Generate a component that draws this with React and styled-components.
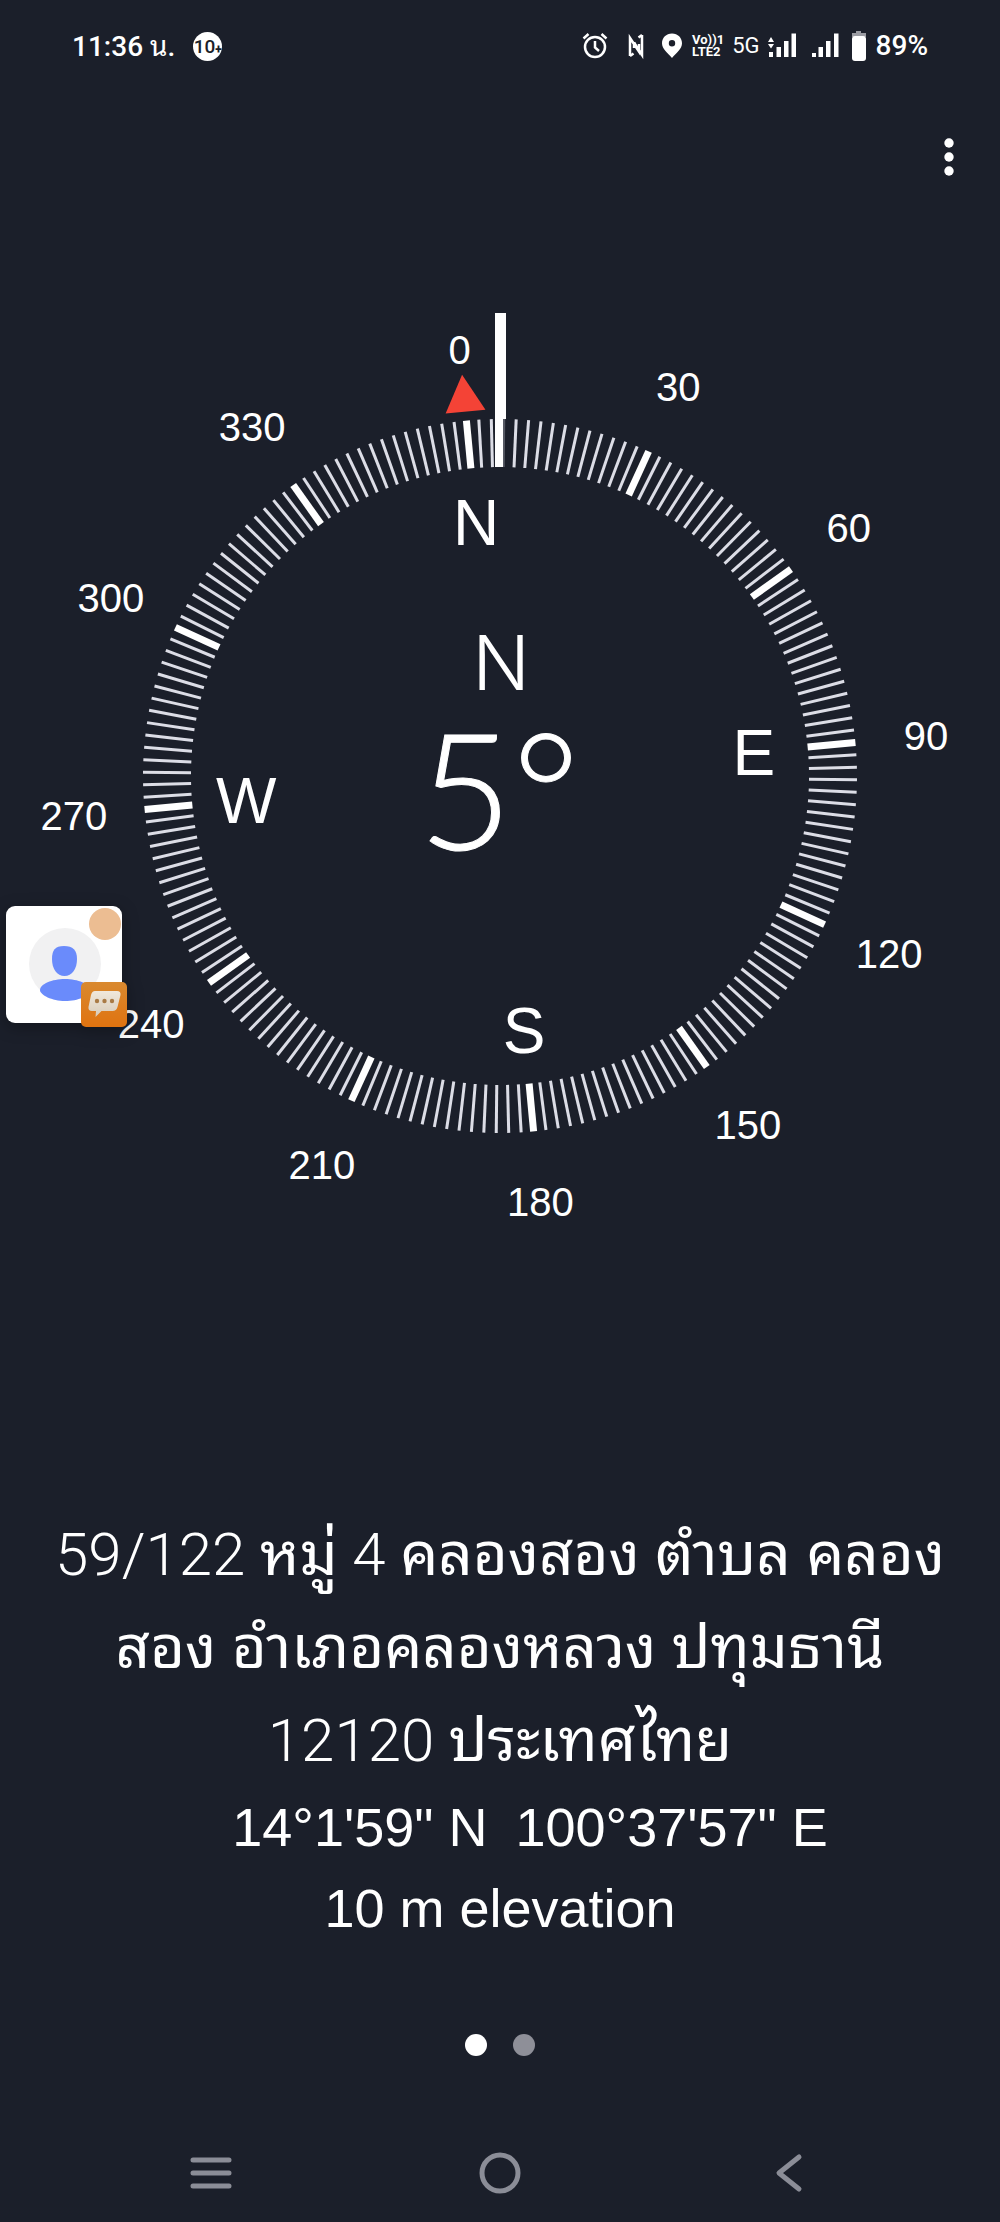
import React from "react";
import styled, { createGlobalStyle } from "styled-components";

const HEADING = 5.4;
const OUTER = 357;
const INNER = 309;

const polar = (deg, r) => {
  const rad = ((deg - HEADING) * Math.PI) / 180;
  return { x: Math.sin(rad) * r, y: -Math.cos(rad) * r };
};

const CARDINALS = [
  { deg: 0, label: "N" },
  { deg: 90, label: "E" },
  { deg: 180, label: "S" },
  { deg: 270, label: "W" },
];

const StatusBar = () => (
  <StatusRow>
    <StatusGroup $gap={18}>
      <StatusText>
        11:36 <Thai>น</Thai>.
      </StatusText>
      <CountBadge>
        10<small>+</small>
      </CountBadge>
    </StatusGroup>
    <StatusGroup $gap={8}>
      <StatusIcon width="26" height="28" viewBox="0 0 26 28">
        <circle cx="13" cy="15" r="10" />
        <path d="M13 9v6.5l4 3.5M1.5 6.5L6.5 2M24.5 6.5L19.5 2" />
      </StatusIcon>
      <StatusIcon width="36" height="28" viewBox="3 0 36 28">
        <path d="M17 24V6l9 13.500V12M21 16v-6" />
        <path d="M29 3v20l-8-12.500M17 24l3.500-2.500M29 3l-3.500 2.500" />
      </StatusIcon>
      <StatusIcon width="24" height="28" viewBox="0 0 24 28">
        <path
          d="M12 1.500C6.200 1.500 2 5.800 2 11.300c0 5.500 5.500 9.500 10 14.700 4.500-5.200 10-9.200 10-14.700C22 5.800 17.800 1.500 12 1.500zm0 6.500a3.200 3.200 0 1 1 0 6.400 3.200 3.200 0 0 1 0-6.400z"
          fill="#fff"
          stroke="none"
        />
      </StatusIcon>
      <Volte>
        <span>Vo))1</span>
        <span>LTE2</span>
      </Volte>
      <Network>5G</Network>
      <StatusIcon width="30" height="28" viewBox="0 0 30 28">
        <g fill="#fff" stroke="none">
          <path d="M0 10l3-5 3 5zM0 12h6l-3 4.500zM1 20h4v5h-4zM8.500 15h4.500v10h-4.500zM16 9h4.500v16h-4.500zM23.500 1.500h4.500v23.500h-4.500z" />
        </g>
      </StatusIcon>
      <StatusIcon width="36" height="28" viewBox="0 0 36 28">
        <path
          d="M6 21h4v4h-4zM12.500 15h4.500v10h-4.500zM20 9h4.500v16h-4.500zM28 1.500h4.500v23.500h-4.500z"
          fill="#fff"
          stroke="none"
        />
      </StatusIcon>
      <StatusIcon width="18" height="30" viewBox="0 0 18 30">
        <path d="M6 0h5v2h5v4H2V2h4z" fill="#9a9ba2" stroke="none" />
        <rect x="2" y="5" width="14" height="25" rx="3" fill="#fff" stroke="none" />
      </StatusIcon>
      <StatusText>89%</StatusText>
    </StatusGroup>
  </StatusRow>
);

const Compass = () => (
  <Dial viewBox="-500 -486 1000 970" role="img" aria-label="Compass">
    {[...Array(180)].map((_, i) => {
      const deg = i * 2;
      const major = deg % 30 === 0;
      // the tick right under the needle is dimmed
      const dim = Math.abs(deg - HEADING) < 1;
      const a = polar(deg, INNER);
      const b = polar(deg, OUTER);
      return (
        <Tick
          key={deg}
          x1={a.x}
          y1={a.y}
          x2={b.x}
          y2={b.y}
          $major={major}
          $dim={dim}
        />
      );
    })}

    {[...Array(12)].map((_, i) => {
      const p = polar(i * 30, 428);
      return (
        <DegreeLabel key={i} x={p.x} y={p.y} dy="14">
          {i * 30}
        </DegreeLabel>
      );
    })}

    {CARDINALS.map(({ deg, label }) => {
      const p = polar(deg, 255);
      return (
        <Cardinal key={label} x={p.x} y={p.y} dy="23">
          {label}
        </Cardinal>
      );
    })}

    <path
      d="M0 -403L20 -366H-20z"
      fill="#f44336"
      transform={`rotate(${-HEADING})`}
    />
    <path d="M-5 -463H6V-357H3V-309H-5z" fill="#fff" />

    <Direction x="1" y="-86">
      N
    </Direction>
    <Bearing x="-1" y="74">
      5°
    </Bearing>
  </Dial>
);

const FloatingBubble = () => (
  <Bubble aria-label="Open chat">
    <svg width="136" height="136" viewBox="0 0 136 136">
      <defs>
        <linearGradient id="chat" x1="0" y1="0" x2="0" y2="1">
          <stop offset="0" stopColor="#d9892f" />
          <stop offset="1" stopColor="#e07310" />
        </linearGradient>
        <linearGradient id="paper" x1="0" y1="0" x2="0" y2="1">
          <stop offset="0" stopColor="#f0e8dc" />
          <stop offset="1" stopColor="#d8cbb8" />
        </linearGradient>
      </defs>
      <rect x="6" y="6" width="116" height="117" rx="9" fill="#fff" />
      <circle cx="65" cy="64" r="36" fill="#f1f1f2" />
      <path
        d="M64 46c9 0 13 4 13 13 0 10-5 17-12.500 17S52 69 52 59c0-9 3-13 12-13z"
        fill="#6a8bfb"
      />
      <path
        d="M40 90c0-6 12-11 25-11s25 5 25 11-12 11-25 11-25-6-25-11z"
        fill="#6a8bfb"
      />
      <circle cx="105" cy="24" r="16" fill="#ecbd92" />
      <rect x="81" y="82" width="46" height="45" rx="5" fill="url(#chat)" />
      <path
        d="M95 91h22q4 0 3.500 4l-3 12q-1 4-5 4h-11l-6 6 .5-6h-4q-4 0-3.500-4l2.500-12q1-4 4-4z"
        fill="url(#paper)"
      />
      <g fill="#a97a45">
        <circle cx="97" cy="101" r="2.200" />
        <circle cx="104.500" cy="101" r="2.200" />
        <circle cx="112" cy="101" r="2.200" />
      </g>
    </svg>
  </Bubble>
);

const App = () => {
  return (
    <>
      <GlobalStyle />
      <Screen>
        <StatusBar />
        <AppBar>
          <IconButton aria-label="More options">
            <svg width="12" height="40" viewBox="0 0 12 40" fill="#fff">
              <circle cx="6" cy="6" r="4.700" />
              <circle cx="6" cy="20" r="4.700" />
              <circle cx="6" cy="34" r="4.700" />
            </svg>
          </IconButton>
        </AppBar>

        <Compass />

        <Location>
          <Address>
            59/122 <Thai>หมู่</Thai> 4 <Thai>คลองสอง ตำบล คลอง</Thai>
            <br />
            <Thai>สอง อำเภอคลองหลวง ปทุมธานี</Thai>
            <br />
            12120 <Thai>ประเทศไทย</Thai>
          </Address>
          <Coordinates>
            <span>14°1'59" N</span>
            <span>100°37'57" E</span>
          </Coordinates>
          <Elevation>10 m elevation</Elevation>
        </Location>

        <Pager>
          <PageDot aria-label="Page 1" $active />
          <PageDot aria-label="Page 2" />
        </Pager>

        <NavBar>
          <IconButton aria-label="Recent apps">
            <NavIcon width="44" height="44" viewBox="0 0 44 44">
              <path d="M4 9h36M4 22h36M4 35h36" />
            </NavIcon>
          </IconButton>
          <IconButton aria-label="Home">
            <NavIcon width="44" height="44" viewBox="0 0 44 44">
              <circle cx="22" cy="22" r="18" />
            </NavIcon>
          </IconButton>
          <IconButton aria-label="Back">
            <NavIcon width="44" height="44" viewBox="0 0 44 44">
              <path d="M32 6L12 22l20 16" />
            </NavIcon>
          </IconButton>
        </NavBar>

        <FloatingBubble />
      </Screen>
    </>
  );
};

const GlobalStyle = createGlobalStyle`
  * {
    box-sizing: border-box;
  }

  body {
    margin: 0;
    background: #1b1f2a;
    color: #fff;
    font-family: "Liberation Sans", "Noto Sans", sans-serif;
  }
`;

const Screen = styled.main`
  position: relative;
  min-height: 100vh;
  display: flex;
  flex-direction: column;
`;

const Thai = styled.span`
  font-family: "Noto Sans Thai Looped", Loma, "Noto Sans Thai", Roboto,
    sans-serif;
  font-weight: 400;
  line-height: 1;
`;

const StatusRow = styled.header`
  display: flex;
  align-items: center;
  justify-content: space-between;
  height: 92px;
  padding: 0 72px;
`;

const StatusGroup = styled.div`
  display: flex;
  align-items: center;
  gap: ${(p) => p.$gap}px;
`;

const StatusText = styled.span`
  font: 500 28px/32px Roboto, sans-serif;
`;

const CountBadge = styled.span`
  display: flex;
  align-items: center;
  justify-content: center;
  width: 29px;
  height: 29px;
  border-radius: 50%;
  background: #fff;
  color: #1b1f2a;
  font: 500 19px/29px Roboto, sans-serif;

  small {
    padding-top: 6px;
    font-size: 12px;
    font-weight: 900;
    line-height: 12px;
    align-self: center;
  }
`;

const StatusIcon = styled.svg`
  flex: none;
  fill: none;
  stroke: #fff;
  stroke-width: 2.5;
`;

const Volte = styled.span`
  display: flex;
  flex-direction: column;
  font: 700 13px/12px Roboto, sans-serif;
  white-space: nowrap;
`;

const Network = styled.span`
  font: 400 22px/28px Roboto, sans-serif;
`;

const AppBar = styled.div`
  display: flex;
  align-items: center;
  justify-content: flex-end;
  height: 130px;
  padding: 0 33px;
`;

const IconButton = styled.button`
  display: flex;
  padding: 12px;
  border: 0;
  background: none;
  cursor: pointer;
`;

const Dial = styled.svg`
  display: block;
  width: 100%;
  margin-top: 68px;
  text-anchor: middle;
  fill: #fff;
`;

const Tick = styled.line`
  stroke: ${(p) => (p.$major ? "#fff" : "#dcdde6")};
  stroke-width: ${(p) => (p.$major ? 7 : 3)};
  opacity: ${(p) => (p.$dim ? 0.3 : 1)};
`;

const DegreeLabel = styled.text`
  font-size: 40px;
`;

const Cardinal = styled.text`
  font-size: 64px;
`;

const Direction = styled.text`
  font-family: Inter, sans-serif;
  font-size: 76px;
  font-weight: 300;
`;

const Bearing = styled.text`
  font-family: Lato, sans-serif;
  font-size: 162px;
  font-weight: 300;
  stroke: #fff;
  stroke-width: 1;
`;

const Location = styled.section`
  margin-top: 248px;
  padding: 0 40px;
  text-align: center;
`;

const Address = styled.p`
  margin: 0;
  font: 300 60px/93px Roboto, sans-serif;
`;

const Coordinates = styled.p`
  display: flex;
  justify-content: center;
  gap: 28px;
  margin: 0;
  padding-left: 60px;
  font-size: 54px;
  line-height: 81px;
`;

const Elevation = styled.p`
  margin: 0;
  font-size: 54px;
  line-height: 81px;
`;

const Pager = styled.div`
  display: flex;
  justify-content: center;
  gap: 26px;
  margin-top: auto;
`;

const PageDot = styled.button`
  width: 22px;
  height: 22px;
  padding: 0;
  border: 0;
  border-radius: 50%;
  background: ${(p) => (p.$active ? "#fff" : "#8e8f98")};
`;

const NavBar = styled.nav`
  display: flex;
  align-items: center;
  justify-content: space-around;
  height: 98px;
  margin-top: 68px;
  padding: 0 66px;
`;

const NavIcon = styled.svg`
  fill: none;
  stroke: #8b8d97;
  stroke-width: 5;
  stroke-linecap: round;
  stroke-linejoin: round;
`;

/* chat head floating above the dial */
const Bubble = styled.button`
  position: absolute;
  top: 900px;
  left: 0;
  display: flex;
  padding: 0;
  border: 0;
  background: none;
  filter: drop-shadow(0 4px 8px rgba(0, 0, 0, 0.3));
`;

export default App;
